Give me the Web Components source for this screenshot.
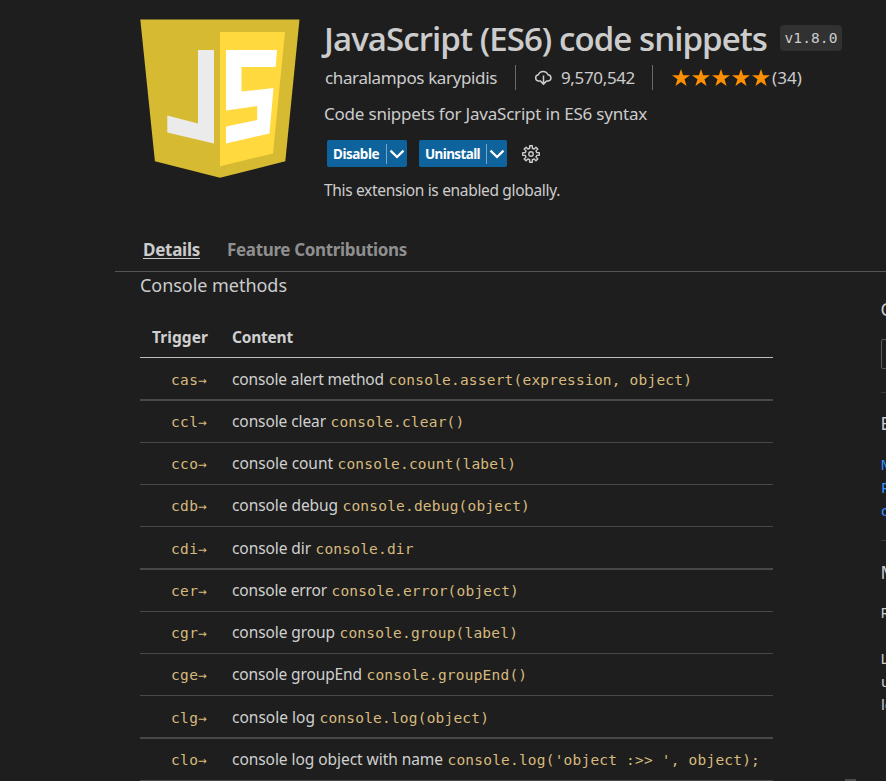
<!DOCTYPE html>
<html lang="en">
<head>
<meta charset="utf-8">
<title>JavaScript (ES6) code snippets</title>
<style>
html,body{margin:0;height:100%;background:#1e1e1e;overflow:hidden}
</style>
</head>
<body>
<extension-page></extension-page>
<script>
const define = (name, html, after) => customElements.define(name, class extends HTMLElement {
  constructor() {
    super();
    this.attachShadow({mode: 'open'});
  }
  connectedCallback() {
    this.shadowRoot.innerHTML = typeof html === 'function' ? html(this) : html;
    if (after) after(this);
  }
});

/* A single line of text tracked so that it takes up the width given in "w". */
define('fit-text', `<style>:host{display:inline-block;white-space:pre;flex:none}</style><slot></slot>`, el => {
  const w = parseFloat(el.getAttribute('w'));
  const r = el.getBoundingClientRect().width;
  el.style.letterSpacing = ((w - r) / el.textContent.length) + 'px';
});

define('js-logo', `<style>:host{display:block;width:160px;height:160px}svg{display:block}</style>
<svg width="160" height="160" viewBox="0 0 160 160">
<path fill="#d6ba32" d="M.3.5H159.500L145.300 142.300 80 158.800 14.900 142.300Z"/>
<path fill="#ffd93e" d="M80 13H145L133 134.500 80 147.300Z"/>
<path fill="#ebebeb" d="M58 31H74V124.500L27.300 113.500V96.500L58 104.500Z"/>
<path fill="#fff" d="M86 31H137L135.700 48H101.500V72.500L133.500 69 129.500 114.500 86 124.500V107.500L117.200 101V87L86 91.500Z"/>
</svg>`);

define('version-badge', `<style>:host{display:flex;align-items:center;justify-content:center;box-sizing:border-box;width:62px;height:26px;border-radius:4px;background:#313131;color:#ccc;font:14.500px/26px "DejaVu Sans Mono",monospace}</style><fit-text w="53"><slot></slot></fit-text>`, el => {
  el.shadowRoot.innerHTML = el.shadowRoot.innerHTML.replace('<slot></slot>', el.textContent);
});

define('action-button', el => `<style>
:host{display:flex;align-items:center;box-sizing:border-box;height:27px;padding-left:6px;border-radius:2px;background:#0e639c;color:#fff;font-weight:700;font-size:13.500px;line-height:27px}
i{width:1px;height:20px;margin-left:auto;background:#77a6c7}
fit-text{position:relative;top:1px}
svg{display:block;margin:0 2px}
</style><fit-text w="${el.getAttribute('label-width')}">${el.textContent}</fit-text><i></i>
<svg width="16" height="16" viewBox="0 0 16 16" fill="none" stroke="#fff" stroke-width="2.300"><path d="M1.500 4.700 8 11 14.500 4.700"/></svg>`);

define('gear-icon', `<style>:host{display:block;width:18px;height:18px}svg{display:block}</style>
<svg width="18" height="18" viewBox="0 0 18 18" fill="none" stroke="#ccc" stroke-width="1.400" stroke-linejoin="round"><path/><circle cx="9" cy="9" r="2.200"/></svg>`, el => {
  const p = [];
  for (let i = 0; i < 8; i++) {
    for (const [a, r] of [[-13, 5.9], [-9, 8.4], [9, 8.4], [13, 5.9]]) {
      const t = (i * 45 + a) * Math.PI / 180;
      p.push((9 + r * Math.sin(t)).toFixed(2) + ' ' + (9 - r * Math.cos(t)).toFixed(2));
    }
  }
  el.shadowRoot.querySelector('path').setAttribute('d', 'M' + p.join('L') + 'Z');
});

define('cloud-icon', `<style>:host{display:block;width:19px;height:16px}svg{display:block}</style>
<svg width="19" height="16" viewBox="0 0 19 16" fill="none" stroke="#ccc" stroke-width="1.500"><path d="M7 11H4.300A3.200 3.200 0 0 1 4.300 4.700 5.200 5.200 0 0 1 14 4.700 3.200 3.200 0 0 1 14.500 11H12M9.500 5.500V14M6.800 11.400 9.500 14.100 12.200 11.400"/></svg>`);

define('star-rating', `<style>:host{display:flex;gap:2px}svg{display:block}</style>` +
  `<svg width="18" height="18" viewBox="0 0 18 18" fill="#ff8e00"><path d="M9 0 11.100 6.300H18L12.500 10.300 14.600 17 9 13 3.400 17 5.500 10.300 0 6.300H6.900Z"/></svg>`.repeat(5));

define('extension-header', `<style>
:host{display:flex;height:236px;padding:19px 0 0 140px;box-sizing:border-box;gap:24px;color:#ccc}
main{width:561px;flex:none}
.row{display:flex;align-items:center}
.title{height:40px;line-height:40px;font-size:33px;font-family:"Open Sans","Noto Sans",sans-serif;font-weight:600}
.title version-badge{margin:0 0 3px 13px}
.meta{height:25px;margin-top:6px;line-height:25px;font-size:17px}
.meta i{width:1px;height:25px;background:#6a6a6a}
.desc{height:24px;margin-top:12px;line-height:24px;font-size:17px}
.actions{height:27px;margin:14px 0 0 3px}
.status{height:24px;margin-top:11px;line-height:24px;font-size:15.500px}
</style>
<js-logo></js-logo>
<main>
<div class="row title"><fit-text w="443">JavaScript (ES6) code snippets</fit-text><version-badge>v1.8.0</version-badge></div>
<div class="row meta"><fit-text w="172" style="margin-left:1px">charalampos karypidis</fit-text><i style="margin:0 18px 0 18px"></i><cloud-icon></cloud-icon><fit-text w="74" style="margin-left:8px">9,570,542</fit-text><i style="margin:0 19px 0 17px"></i><star-rating></star-rating><fit-text w="30" style="margin-left:2px">(34)</fit-text></div>
<div class="desc"><fit-text w="323">Code snippets for JavaScript in ES6 syntax</fit-text></div>
<div class="row actions"><action-button label-width="46" style="width:80px">Disable</action-button><action-button label-width="55" style="width:88px;margin-left:12px">Uninstall</action-button><gear-icon style="margin-left:15px"></gear-icon></div>
<div class="status"><fit-text w="236">This extension is enabled globally.</fit-text></div>
</main>`);

define('tab-bar', `<style>
:host{display:flex;height:36px;margin-left:115px;padding-left:28px;box-sizing:border-box;border-bottom:1px solid #555;gap:27px;line-height:27px;font-size:17px;font-weight:700;color:#8f8f8f}
.on{color:#ccc;height:22px;border-bottom:1px solid #ccc}
</style><fit-text class="on" w="57">Details</fit-text><fit-text w="180">Feature Contributions</fit-text>`);

define('snippet-row', el => `<style>
:host{display:flex;box-sizing:border-box;height:42px;line-height:41px;border-bottom:1px solid #484848}
:host([thick]){height:43px;padding-top:1px;border-bottom-width:2px}
code{font:14.500px/43px "DejaVu Sans Mono",monospace;color:#d7ba7d}
.t{width:61px;padding-left:31px}
</style><code class="t"><fit-text w="36.500">${el.getAttribute('trigger')}→</fit-text></code><fit-text w="${el.getAttribute('w')}">${el.getAttribute('label')}</fit-text><code style="margin-left:4.500px"><fit-text w="${el.textContent.length * 8.93}">${el.textContent}</fit-text></code>`);

define('snippet-table', `<style>
:host{display:block;width:633px;font-size:15.500px;color:#d0d0d0}
.head{display:flex;box-sizing:border-box;height:38px;line-height:35px;padding-left:12px;gap:24px;font-weight:700;border-bottom:1px solid #bcbcbc}
</style>
<div class="head"><fit-text w="56">Trigger</fit-text><fit-text w="61">Content</fit-text></div>
<snippet-row thick trigger="cas" w="152" label="console alert method">console.assert(expression, object)</snippet-row>
<snippet-row trigger="ccl" w="94" label="console clear">console.clear()</snippet-row>
<snippet-row trigger="cco" w="101" label="console count">console.count(label)</snippet-row>
<snippet-row trigger="cdb" w="106" label="console debug">console.debug(object)</snippet-row>
<snippet-row thick trigger="cdi" w="79" label="console dir">console.dir</snippet-row>
<snippet-row trigger="cer" w="95" label="console error">console.error(object)</snippet-row>
<snippet-row trigger="cgr" w="103" label="console group">console.group(label)</snippet-row>
<snippet-row trigger="cge" w="130" label="console groupEnd">console.groupEnd()</snippet-row>
<snippet-row thick trigger="clg" w="83" label="console log">console.log(object)</snippet-row>
<snippet-row trigger="clo" w="211" label="console log object with name">console.log('object :&gt;&gt; ', object);</snippet-row>`);

/* Narrow strip of the sidebar that is visible at the window's right edge. */
define('side-panel', `<style>
:host{display:block;width:5px;height:509px;overflow:hidden;color:#ccc;font-size:15px;line-height:23px;white-space:nowrap}
h3,p,.links{text-indent:-.5px}
h3{margin:0;font-size:18px;font-weight:400;line-height:24px}
.chip{width:40px;height:30px;box-sizing:border-box;border:1px solid #5a5a5a;border-radius:2px;margin:18px 0 23px}
hr{margin:0;border:0;height:1px;background:#383838}
.links{color:#3794ff;margin:18px 0 18px}
p{margin:0}
</style>
<h3 style="padding-top:25px">C</h3><div class="chip"></div><hr>
<h3 style="padding-top:18px">E</h3><div class="links">M<br>R<br>c</div><hr>
<h3 style="padding-top:19px">M</h3><p style="margin-top:17px">R</p><p style="margin-top:23px">L<br>u<br>le</p>`);

define('extension-page', `<style>
:host{display:block;width:886px;height:781px;overflow:hidden;background:#1e1e1e;color:#ccc;font-family:"Noto Sans","Open Sans",sans-serif}
.body{display:flex;justify-content:space-between;padding-left:140px;height:509px}
.intro{height:48px;line-height:26px;font-size:18px}
footer{width:11px;height:2px;background:#4b4b4b;position:absolute;left:845px;top:779px}
</style>
<extension-header></extension-header>
<tab-bar></tab-bar>
<div class="body"><div><div class="intro"><fit-text w="147">Console methods</fit-text></div><snippet-table></snippet-table></div><side-panel></side-panel></div>
<footer></footer>`);
</script>
</body>
</html>
